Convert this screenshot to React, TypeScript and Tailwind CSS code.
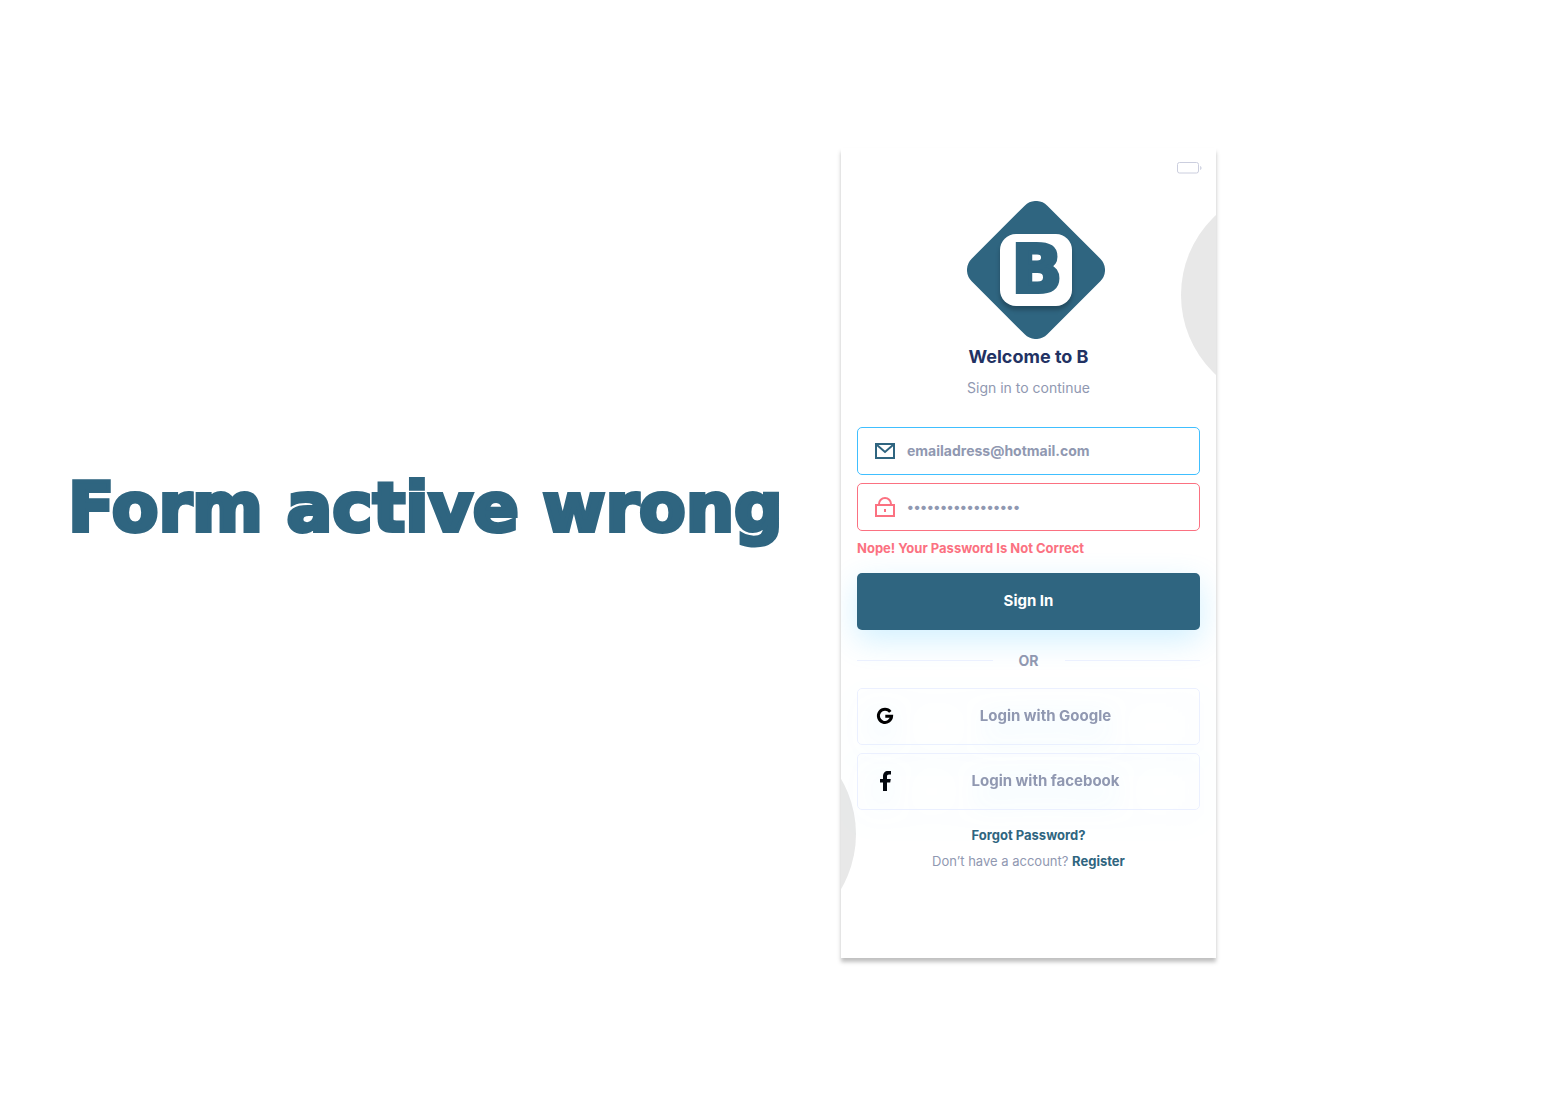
import React from "react";

function Logo() {
  return (
    <div className="relative ml-[15px] grid size-[138px] place-items-center">
      <svg viewBox="0 0 138 138" className="absolute inset-0 size-full" aria-hidden="true">
        <rect x="15.5" y="15.5" width="107" height="107" rx="16" fill="#2f6580" transform="rotate(45 69 69)" />
      </svg>
      <div className="relative grid size-[72px] place-items-center rounded-2xl bg-white pl-0.5 font-['DejaVu_Sans',sans-serif] text-[66px] leading-none font-bold text-[#2f6580] shadow-[0_4px_4px_rgba(0,0,0,0.25)] [-webkit-text-stroke:4px_#2f6580]">
        B
      </div>
    </div>
  );
}

function MailIcon() {
  return (
    <svg viewBox="0 0 24 24" className="size-6 shrink-0" fill="none" stroke="#2f6580" strokeWidth="2" aria-hidden="true">
      <rect x="3" y="5" width="18" height="14" />
      <path d="M4 6l8 7 8-7" />
    </svg>
  );
}

function LockIcon() {
  return (
    <svg viewBox="0 0 24 24" className="size-6 shrink-0" fill="none" stroke="#fb7181" strokeWidth="2" aria-hidden="true">
      <rect x="3" y="10" width="18" height="11" />
      <path d="M6 10V9a6 6 0 0 1 12 0v1" />
      <path d="M12 14v3" />
    </svg>
  );
}

function GoogleIcon() {
  return (
    <svg viewBox="0 0 24 24" className="size-6 shrink-0" fill="none" stroke="#000" strokeWidth="3" aria-hidden="true">
      <path d="M17.300 7.900A6.600 6.600 0 1 0 18.600 12.200H12.300" />
    </svg>
  );
}

function FacebookIcon() {
  return (
    <svg viewBox="0 0 24 24" className="size-6 shrink-0" fill="#04080f" aria-hidden="true">
      <path d="M10 22v-8.500H7v-3.500h3V7.500C10 4 11.800 2 15 2h3v3.500h-2c-1.500 0-2 .700-2 2V10h3.800l-.600 3.500H14V22z" />
    </svg>
  );
}

function SocialButton({ icon, children }: { icon: React.ReactNode; children: React.ReactNode }) {
  return (
    <button
      type="button"
      className="flex h-[57px] w-full items-center gap-2.5 rounded-[5px] border border-[#ebf0ff] px-[15px] text-[15px] font-bold text-[#9098b1] drop-shadow-[0_10px_15px_rgba(64,191,255,0.24)]"
    >
      {icon}
      <span className="flex-1 text-center">{children}</span>
    </button>
  );
}

export default function App() {
  return (
    <main className="flex min-h-screen items-center bg-white pr-[336px] pb-1 pl-[68px] font-['Inter',sans-serif]">
      <h1 className="flex-1 pb-[90px] font-['DejaVu_Sans',sans-serif] text-[68px] leading-none font-bold whitespace-nowrap text-[#2f6580] [-webkit-text-stroke:4px_#2f6580]">
        Form active wrong
      </h1>
      <section className="relative flex w-[375px] shrink-0 flex-col overflow-hidden bg-white px-4 pb-[88px] shadow-[0_4px_4px_rgba(0,0,0,0.25)]">
        <div className="absolute top-[38px] -right-[183px] size-[218px] rounded-full bg-[#e8e8e8]" />
        <div className="absolute top-[577px] -left-[203px] size-[218px] rounded-full bg-[#e8e8e8]" />

        <header className="relative flex justify-end pt-3.5">
          <svg viewBox="0 0 26 12" className="-mr-0.5 h-3 w-[26px]" fill="none" aria-label="Battery">
            <rect x="1.5" y="0.5" width="21" height="10.5" rx="2" stroke="#cbcede" />
            <path d="M24.200 4v4c.800-.300 1.300-1.100 1.300-2s-.500-1.700-1.300-2z" fill="#cbcede" />
          </svg>
        </header>

        <div className="relative mt-[27px] flex flex-col items-center">
          <Logo />
          <h2 className="mt-1.5 text-lg leading-6 font-bold text-[#223263]">Welcome to B</h2>
          <p className="mt-2 text-sm leading-[22px] text-[#9098b1]">Sign in to continue</p>
        </div>

        <form className="relative mt-7 flex flex-col" onSubmit={(e) => e.preventDefault()}>
          <label className="flex h-12 items-center gap-2.5 rounded-[5px] border border-[#40bfff] px-[15px]">
            <MailIcon />
            <input
              type="email"
              aria-label="Email"
              defaultValue="emailadress@hotmail.com"
              className="min-w-0 flex-1 bg-transparent text-sm font-bold text-[#9098b1] outline-none"
            />
          </label>
          <label className="mt-2 flex h-12 items-center gap-2.5 rounded-[5px] border border-[#fb7181] px-[15px]">
            <LockIcon />
            <input
              type="password"
              aria-label="Password"
              defaultValue="passwordpassword1"
              className="min-w-0 flex-1 bg-transparent text-sm font-bold text-[#9098b1] outline-none"
            />
          </label>
          <p className="mt-2 text-[13px] leading-[18px] font-bold text-[#fb7181]">Nope! Your Password Is Not Correct</p>
          <button
            type="submit"
            className="mt-4 h-[57px] rounded-[5px] bg-[#2f6580] text-[15px] font-bold text-white shadow-[0_10px_30px_rgba(64,191,255,0.24)]"
          >
            Sign In
          </button>
        </form>

        <div className="relative mt-5 flex items-center text-sm leading-[22px] font-bold text-[#9098b1]">
          <span className="h-px flex-1 bg-[#ebf0ff]" />
          <span className="w-[72px] text-center">OR</span>
          <span className="h-px flex-1 bg-[#ebf0ff]" />
        </div>

        <div className="relative mt-4 flex flex-col gap-2">
          <SocialButton icon={<GoogleIcon />}>Login with Google</SocialButton>
          <SocialButton icon={<FacebookIcon />}>Login with facebook</SocialButton>
        </div>

        <footer className="relative mt-4 flex flex-col items-center gap-2 text-[13px] leading-[18px]">
          <a href="#forgot" className="font-bold text-[#2f6580]">Forgot Password?</a>
          <p className="text-[#9098b1]">
            Don’t have a account? <a href="#register" className="font-bold text-[#2f6580]">Register</a>
          </p>
        </footer>
      </section>
    </main>
  );
}
